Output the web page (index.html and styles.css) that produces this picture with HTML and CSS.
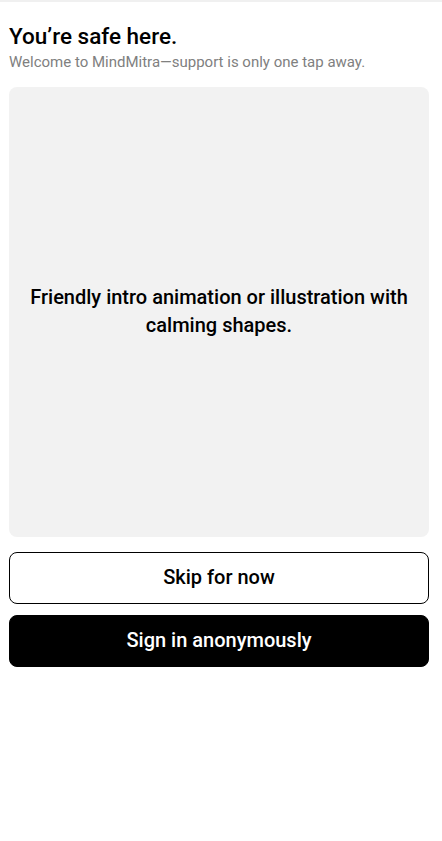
FILE: index.html
```html
<!DOCTYPE html>
<html>
<head>
<meta charset="utf-8">
<link rel="stylesheet" href="styles.css">
</head>
<body>
<div class="topbar"></div>
<main class="screen">
  <header class="intro">
    <h1 class="title">You’re safe here.</h1>
    <p class="subtitle">Welcome to MindMitra—support is only one tap away.</p>
  </header>
  <section class="hero">
    <p class="hero-text">Friendly intro animation or illustration with calming shapes.</p>
  </section>
  <div class="actions">
    <button class="btn btn-outline">Skip for now</button>
    <button class="btn btn-solid">Sign in anonymously</button>
  </div>
</main>
</body>
</html>
```
FILE: styles.css
```css
html, body {
  margin: 0;
  padding: 0;
  background: #ffffff;
  font-family: Roboto, "Noto Sans", sans-serif;
  color: #000;
}
.topbar {
  height: 2px;
  background: #f0f0f0;
}
.screen {
  width: 420px;
  padding: 0 0 0 9px;
  display: flex;
  flex-direction: column;
}
.intro {
  padding-top: 20px;
}
.title {
  margin: 0;
  font-size: 22.5px;
  font-weight: 500;
  line-height: 28px;
}
.subtitle {
  margin: 2px 0 0;
  font-size: 15px;
  line-height: 20px;
  color: #808080;
}
.hero {
  margin-top: 15px;
  height: 450px;
  background: #f2f2f2;
  border-radius: 8px;
  display: flex;
  align-items: center;
  justify-content: center;
  padding: 0 12px 2px;
  box-sizing: border-box;
}
.hero-text {
  margin: 0;
  font-size: 20px;
  font-weight: 500;
  line-height: 28px;
  text-align: center;
}
.actions {
  margin-top: 15px;
  display: flex;
  flex-direction: column;
  gap: 11px;
}
.btn {
  height: 52px;
  padding: 0 0 2px;
  border-radius: 8px;
  font-family: Roboto, "Noto Sans", sans-serif;
  font-size: 20px;
  font-weight: 500;
  border: 1px solid #000;
  cursor: pointer;
}
.btn-outline {
  background: #fff;
  color: #000;
}
.btn-solid {
  background: #000;
  color: #fff;
}
```
